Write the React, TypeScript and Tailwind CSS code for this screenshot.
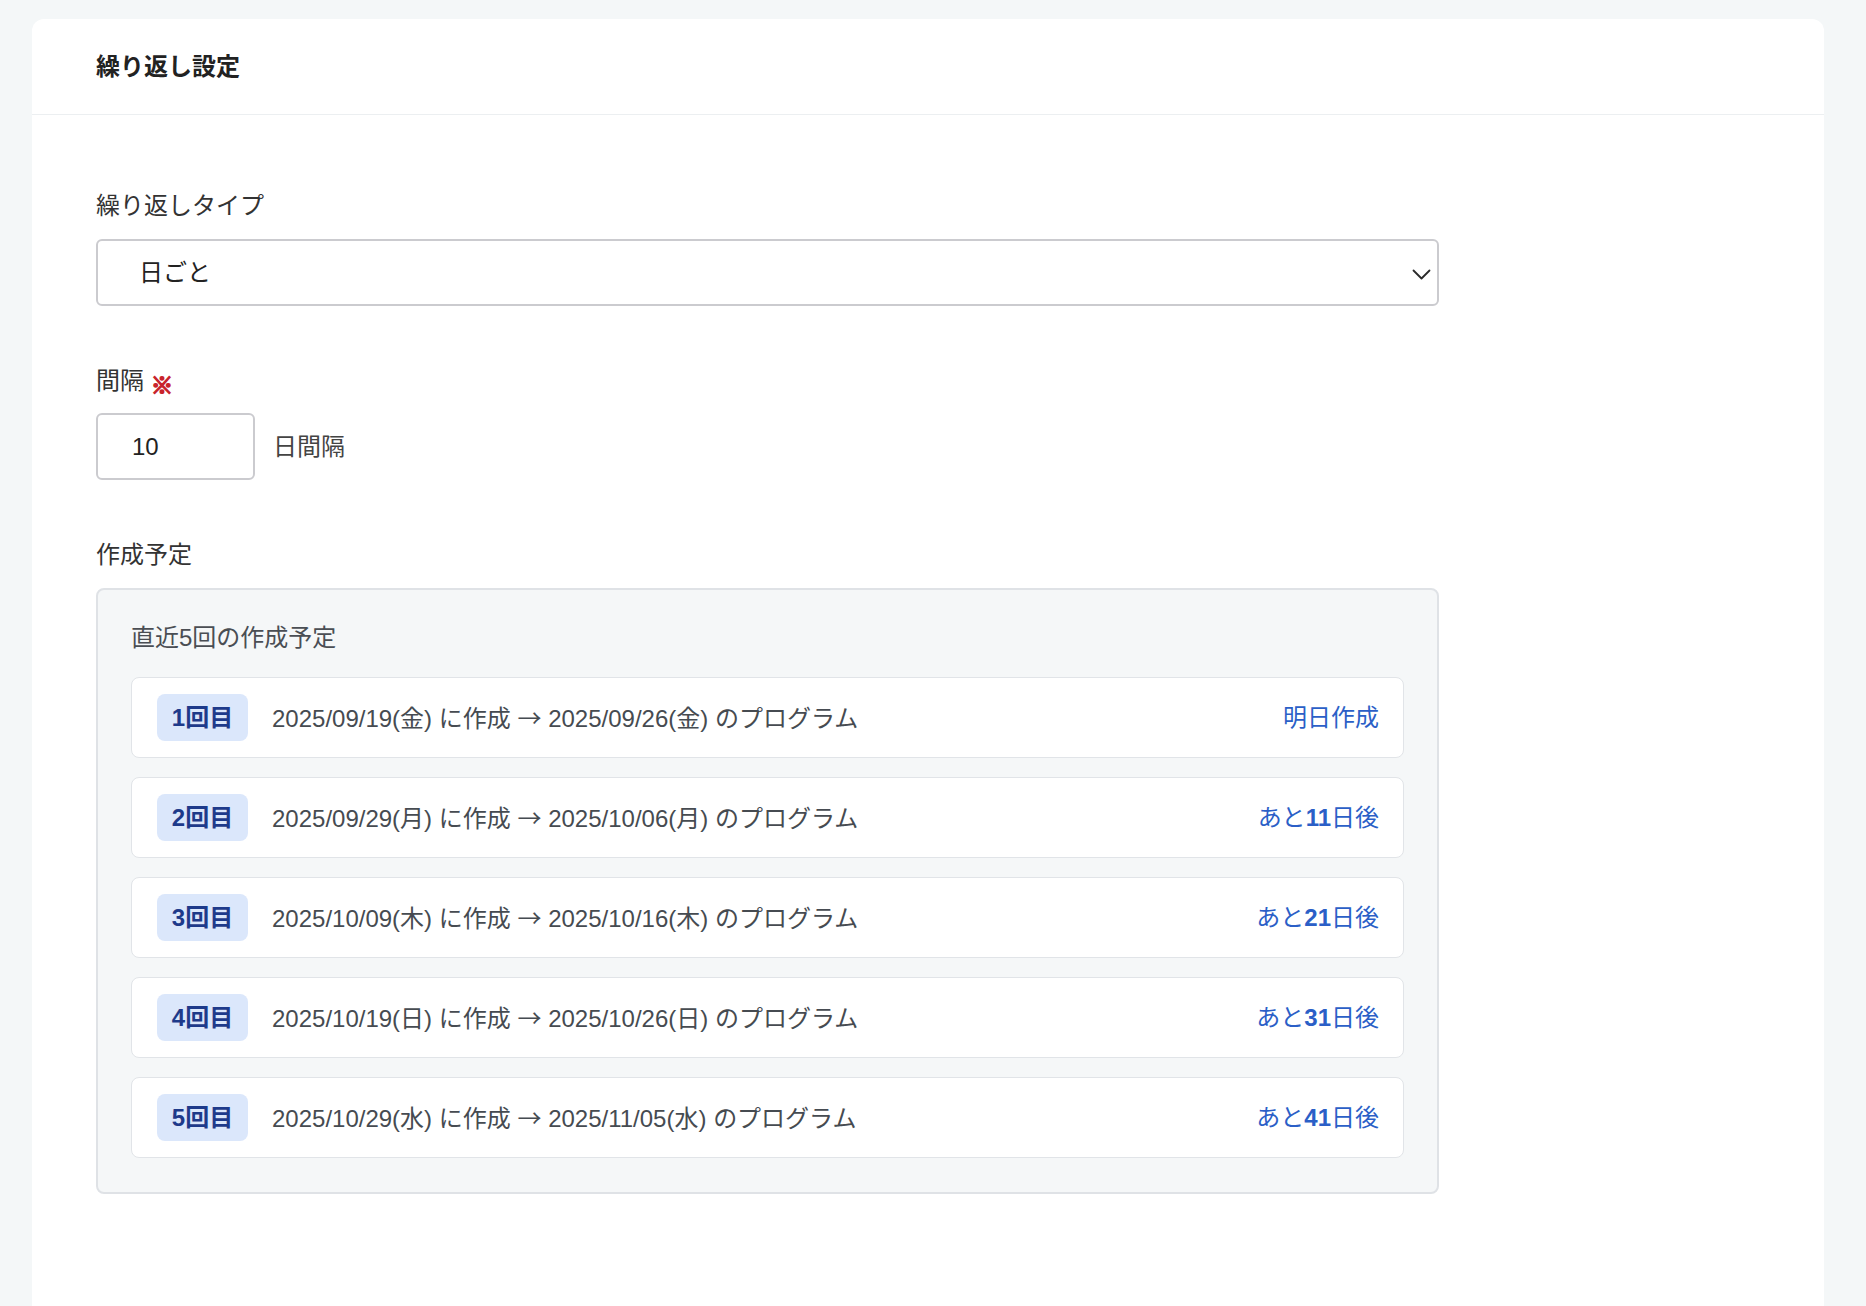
const schedule = [
  { n: 1, make: "2025/09/19(金)", target: "2025/09/26(金)", days: null },
  { n: 2, make: "2025/09/29(月)", target: "2025/10/06(月)", days: 11 },
  { n: 3, make: "2025/10/09(木)", target: "2025/10/16(木)", days: 21 },
  { n: 4, make: "2025/10/19(日)", target: "2025/10/26(日)", days: 31 },
  { n: 5, make: "2025/10/29(水)", target: "2025/11/05(水)", days: 41 },
];

function ScheduleRow({
  n,
  make,
  target,
  days,
}: {
  n: number;
  make: string;
  target: string;
  days: number | null;
}) {
  return (
    <div className="flex h-[81px] items-center rounded-[8px] border border-[#e1e4e8] bg-white pl-[25px] pr-[24px]">
      <span className="flex h-[47px] w-[91px] items-center justify-center rounded-[8px] bg-[#dbe7fb] text-[24px] font-bold text-[#1e3a8a]">
        {n}回目
      </span>
      <span className="ml-[24px] text-[24px] text-[#464b51]">
        {make} に作成{" "}
        <span className="font-['Noto_Sans_CJK_JP',sans-serif]">→</span> {target}{" "}
        のプログラム
      </span>
      <span className="ml-auto text-[24px] text-[#2b5fc7]">
        {days === null ? (
          "明日作成"
        ) : (
          <>
            あと<span className="font-bold">{days}</span>日後
          </>
        )}
      </span>
    </div>
  );
}

export default function App() {
  return (
    <div className="min-h-[1306px] bg-[#f4f7f8] pl-[32px] pt-[19px] font-['Liberation_Sans','Noto_Sans_CJK_JP',sans-serif] text-[#333]">
      <div className="min-h-[1287px] w-[1792px] rounded-t-[12px] bg-white">
        <div className="flex h-[96px] items-center border-b border-[#eceff1] px-[64px]">
          <h1 className="text-[24px] font-bold text-[#222]">繰り返し設定</h1>
        </div>

        <div className="px-[64px] pt-[73px]">
          <div className="w-[1343px]">
            <label className="block text-[24px] leading-[36px]">繰り返しタイプ</label>
            <div className="mt-[15px] flex h-[67px] items-center justify-between rounded-[6px] border-2 border-[#cbcbcf] pl-[41px] pr-[6px]">
              <span className="text-[24px] text-[#222]">日ごと</span>
              <svg width="19" height="11" viewBox="0 0 19 11" fill="none" className="mt-[3px]">
                <polyline
                  points="1.5,1.5 9.5,9.5 17.5,1.5"
                  stroke="#2a2a2a"
                  strokeWidth="1.8"
                  strokeLinecap="round"
                  strokeLinejoin="round"
                />
              </svg>
            </div>

            <div className="mt-[57px] flex items-center text-[24px] leading-[36px]">
              <span>間隔</span>
              <span className="ml-[7px] mt-[3px] font-['Noto_Sans_CJK_JP',sans-serif] text-[22px] font-black leading-none text-[#c8232c] [-webkit-text-stroke:1.6px_#c8232c]">
                ※
              </span>
            </div>
            <div className="mt-[14px] flex items-center">
              <div className="flex h-[67px] w-[159px] items-center rounded-[6px] border-2 border-[#cbcbcf] pl-[34px] text-[24px] text-[#222]">
                10
              </div>
              <span className="ml-[18px] text-[24px] text-[#444]">日間隔</span>
            </div>

            <div className="mt-[57px] text-[24px] leading-[36px]">作成予定</div>
            <div className="mt-[15px] rounded-[8px] border-2 border-[#dfe2e6] bg-[#f5f7f8] px-[33px] pb-[34px] pt-[30px]">
              <div className="text-[24px] leading-[36px] text-[#4a4e54]">直近5回の作成予定</div>
              <div className="mt-[21px] flex flex-col gap-[19px]">
                {schedule.map((s) => (
                  <ScheduleRow key={s.n} {...s} />
                ))}
              </div>
            </div>
          </div>
        </div>
      </div>
    </div>
  );
}
